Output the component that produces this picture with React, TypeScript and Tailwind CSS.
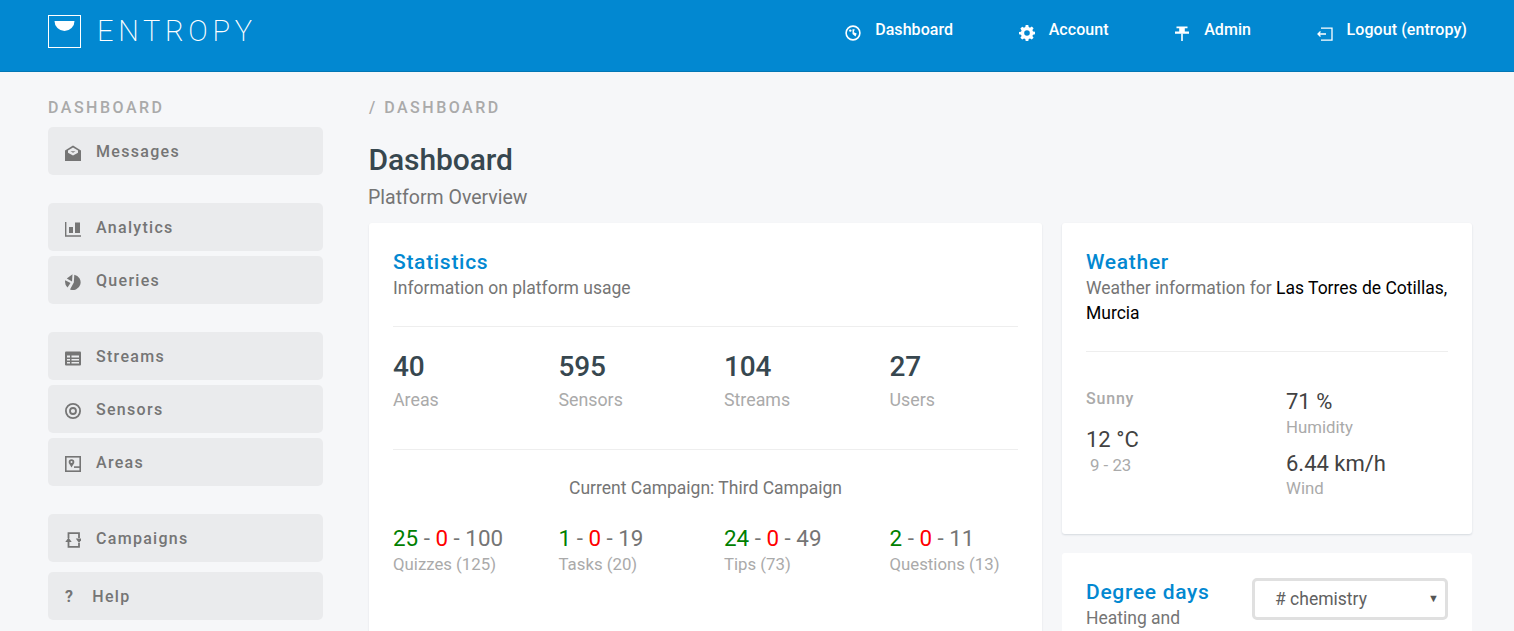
import type { ReactNode } from "react";

const font = "font-['Roboto',sans-serif]";

function Logo() {
  return (
    <svg width="33" height="33" viewBox="0 0 33 33" className="shrink-0">
      <rect x="0.5" y="0.5" width="32" height="32" fill="none" stroke="#fff" />
      <path d="M6.500 6h20a10 10 0 0 1-20 0z" fill="#fff" />
    </svg>
  );
}

function NavIcon({ name }: { name: string }) {
  if (name === "dashboard")
    return (
      <svg width="16" height="16" viewBox="0 0 16 16">
        <circle cx="8" cy="8" r="6.900" fill="none" stroke="#fff" strokeWidth="1.600" />
        <circle cx="5.300" cy="5.600" r="1.200" fill="#fff" />
        <path d="M7.500 4.200h2.200L8.800 7.300l2.900 1.200-1.200 2.900-3-2.500z" fill="#fff" />
      </svg>
    );
  if (name === "account")
    return (
      <svg width="16" height="16" viewBox="0 0 16 16">
        <path
          fillRule="evenodd"
          d="M6.700 0h2.600l.4 2.100 1.300.6L12.800 1.500l1.800 1.800-1.200 1.800.6 1.300 2 .4v2.500l-2 .4-.6 1.400 1.200 1.700-1.800 1.800-1.800-1.200-1.300.6-.4 2H6.700l-.4-2-1.300-.6-1.800 1.200-1.800-1.800 1.200-1.700-.6-1.400-2-.4V7.100l2-.4.600-1.300-1.200-1.800 1.800-1.800L5 2.700l1.300-.6zM8 5.200a2.800 2.800 0 100 5.600 2.800 2.800 0 000-5.600z"
          fill="#fff"
        />
      </svg>
    );
  if (name === "admin")
    return (
      <svg width="16" height="16" viewBox="0 0 16 16">
        <path d="M2.500 1.500h11v1.700h-2.700v3.300H15v2.200H1V6.500h4.200V3.200H2.500z" fill="#fff" />
        <rect x="7.200" y="8.500" width="1.600" height="7.500" fill="#fff" />
      </svg>
    );
  return (
    <svg width="16" height="16" viewBox="0 0 16 16" fill="none" stroke="#fff" strokeWidth="1.300">
      <path d="M4 3.200h11v12H4" />
      <path d="M1 9h8M3.500 6.500L1 9l2.500 2.500" />
    </svg>
  );
}

function SideIcon({ name }: { name: string }) {
  const c = "#757575";
  const s = (children: ReactNode) => (
    <svg width="16" height="16" viewBox="0 0 16 16" className="shrink-0 translate-y-[2px]">
      {children}
    </svg>
  );
  switch (name) {
    case "messages":
      return s(
        <>
          <path d="M0 5.500L8 .5l8 5V16H0z" fill={c} />
          <path d="M3 5.500L8 2.500l5 3v2.300L8 10.500 3 7.800z" fill="#eaebed" />
          <path d="M5.500 6h5L8 8z" fill={c} opacity=".7" />
        </>,
      );
    case "analytics":
      return s(
        <>
          <path d="M.7 1v14h15.300" fill="none" stroke={c} strokeWidth="1.400" />
          <rect x="4" y="6" width="4" height="6" fill={c} />
          <rect x="10" y="1.500" width="5" height="10.500" fill={c} />
        </>,
      );
    case "queries":
      return s(
        <>
          <path d="M7 7.500L1.800 4.500L7.500 .3z" fill={c} />
          <path d="M8.800 8.500L9.300 .8A7.700 7.700 0 1 1 5 15.500z" fill={c} />
          <path d="M5.500 9L2.500 13.500A8 8 0 0 1 .2 6.300z" fill={c} />
        </>,
      );
    case "streams":
      return s(
        <>
          <rect x="0" y="1.500" width="16" height="14" rx="1" fill={c} />
          <path d="M2 5.500h3v2H2zM6.500 5.500H14v2H6.500zM2 9h3v1.500H2zM6.500 9H14v1.500H6.500zM2 12h3v1.500H2zM6.500 12H14v1.500H6.500z" fill="#eaebed" />
        </>,
      );
    case "sensors":
      return s(
        <>
          <circle cx="8" cy="8" r="7.100" fill="none" stroke={c} strokeWidth="1.800" />
          <circle cx="8" cy="8" r="3" fill="none" stroke={c} strokeWidth="1.800" />
        </>,
      );
    case "areas":
      return s(
        <>
          <rect x=".8" y=".8" width="14.400" height="14.400" fill="none" stroke={c} strokeWidth="1.600" />
          <circle cx="6.500" cy="6" r="2.800" fill={c} />
          <circle cx="6.500" cy="6" r="1" fill="#eaebed" />
          <path d="M4.500 8L6.500 11.500l2-3.500z" fill={c} />
          <rect x="9" y="10.300" width="6" height="1.600" fill={c} />
        </>,
      );
    default:
      return s(
        <>
          <path d="M3.500 6V1.200H14V6M14 11V14.800H3.500V10" fill="none" stroke={c} strokeWidth="1.800" />
          <path d="M10.800 6.500h6.400L14 11z" fill={c} />
          <path d="M.3 10h6.400L3.500 5.500z" fill={c} />
        </>,
      );
  }
}

function SideItem({ icon, label, className = "" }: { icon: string; label: string; className?: string }) {
  return (
    <a className={`flex h-12 items-center rounded-[5px] bg-[#eaebed] pl-[17px] text-[16px] font-medium tracking-[1.3px] text-[#757575] ${className}`}>
      <SideIcon name={icon} />
      <span className="ml-[15px] translate-y-px">{label}</span>
    </a>
  );
}

function Stat({ value, label }: { value: string; label: string }) {
  return (
    <div>
      <div className="h-[37px] text-[28px] font-medium leading-[37px] tracking-[-0.2px] text-[#37474f]">{value}</div>
      <div className="mt-[5px] text-[17.800px] leading-[20px] text-[#aaaaaa]">{label}</div>
    </div>
  );
}

function Campaign({ a, b, c, label }: { a: number; b: number; c: number; label: string }) {
  return (
    <div>
      <div className="text-[22.400px] leading-[26px] text-[#757575]">
        <span className="text-[#008000]">{a}</span> - <span className="text-[#ff0000]">{b}</span> - {c}
      </div>
      <div className="mt-[3px] text-[16.800px] leading-[20px] text-[#aaaaaa]">{label}</div>
    </div>
  );
}

export default function App() {
  const nav = [
    { icon: "dashboard", label: "Dashboard" },
    { icon: "account", label: "Account" },
    { icon: "admin", label: "Admin" },
    { icon: "logout", label: "Logout (entropy)" },
  ];

  return (
    <div className={`h-[631px] overflow-hidden bg-[#f6f7f9] ${font}`}>
      <header className="flex h-[72px] items-start justify-between border-b border-[#0277b5] bg-[#0288d1] pl-[48px] pr-[47px]">
        <div className="mt-[15px] flex items-center">
          <Logo />
          <span className="ml-[16px] text-[29px] font-extralight leading-[33px] tracking-[4.650px] text-white">ENTROPY</span>
        </div>
        <nav className="mt-[20px] flex gap-[65.500px]">
          {nav.map((item) => (
            <a key={item.icon} className="flex items-start text-[16px] font-medium leading-[20px] tracking-[0.07px] text-white">
              <span className="mr-[14px] mt-[5px]">
                <NavIcon name={item.icon} />
              </span>
              {item.label}
            </a>
          ))}
        </nav>
      </header>

      <div className="flex items-start pl-[48px] pr-[42px]">
        <aside className="w-[275px] shrink-0 pt-[26px]">
          <div className="text-[16px] font-medium leading-[19px] tracking-[2.500px] text-[#aaaaaa]">DASHBOARD</div>
          <div className="mt-[10px] flex flex-col">
            <SideItem icon="messages" label="Messages" />
            <SideItem icon="analytics" label="Analytics" className="mt-[28px]" />
            <SideItem icon="queries" label="Queries" className="mt-[5px]" />
            <SideItem icon="streams" label="Streams" className="mt-[28px]" />
            <SideItem icon="sensors" label="Sensors" className="mt-[5px]" />
            <SideItem icon="areas" label="Areas" className="mt-[5px]" />
            <SideItem icon="campaigns" label="Campaigns" className="mt-[28px]" />
            <a className="mt-[10px] flex h-12 items-center rounded-[5px] bg-[#eaebed] pl-[17px] text-[16px] font-medium tracking-[1.300px] text-[#757575]">
              <span className="translate-y-px font-bold">?</span>
              <span className="ml-[18px] translate-y-px">Help</span>
            </a>
          </div>
        </aside>

        <main className="ml-[46px] min-w-0 flex-1 pt-[26px]">
          <div className="text-[16px] font-medium leading-[19px] tracking-[2.500px] text-[#aaaaaa]">/ DASHBOARD</div>
          <h1 className="-ml-[0.5px] mt-[24px] text-[30px] font-medium leading-[38px] tracking-[-0.1px] text-[#37474f]">Dashboard</h1>
          <p className="-ml-px mt-[7px] text-[19.500px] leading-[24px] text-[#757575]">Platform Overview</p>

          <div className="mt-[13px] flex items-start gap-[20px]">
            <section className="h-[420px] w-[673px] shrink-0 rounded-[3px] bg-white px-[24px] pt-[26px] shadow-[0_1px_2px_rgba(40,60,90,0.12)]">
              <h2 className="text-[21px] font-medium leading-[26px] tracking-[0.700px] text-[#0288d1]">Statistics</h2>
              <p className="mt-px text-[17.500px] leading-[25px] text-[#757575]">Information on platform usage</p>
              <hr className="mt-[25px] border-[#eeeeee]" />
              <div className="mt-[21px] grid grid-cols-[165.500px_165.500px_165.500px_1fr]">
                <Stat value="40" label="Areas" />
                <Stat value="595" label="Sensors" />
                <Stat value="104" label="Streams" />
                <Stat value="27" label="Users" />
              </div>
              <hr className="mt-[39px] border-[#eeeeee]" />
              <div className="mt-[27px] text-center text-[17.500px] leading-[22px] text-[#757575]">Current Campaign: Third Campaign</div>
              <div className="mt-[26px] grid grid-cols-[165.500px_165.500px_165.500px_1fr]">
                <Campaign a={25} b={0} c={100} label="Quizzes (125)" />
                <Campaign a={1} b={0} c={19} label="Tasks (20)" />
                <Campaign a={24} b={0} c={49} label="Tips (73)" />
                <Campaign a={2} b={0} c={11} label="Questions (13)" />
              </div>
            </section>

            <div className="min-w-0 flex-1">
              <section className="h-[311px] rounded-[3px] bg-white px-[24px] pt-[26px] shadow-[0_1px_2px_rgba(40,60,90,0.16)]">
                <h2 className="text-[21px] font-medium leading-[26px] tracking-[0.700px] text-[#0288d1]">Weather</h2>
                <p className="mt-px text-[17.500px] leading-[25px] text-[#757575]">
                  Weather information for <span className="text-black">Las Torres de Cotillas, Murcia</span>
                </p>
                <hr className="mt-[25px] border-[#eeeeee]" />
                <div className="mt-[37px] grid grid-cols-[200px_1fr]">
                  <div>
                    <div className="text-[16px] font-medium leading-[20px] tracking-[0.800px] text-[#aaaaaa]">Sunny</div>
                    <div className="mt-[18px] text-[22px] leading-[26px] text-[#424242]">12 °C</div>
                    <div className="ml-[4px] mt-[2px] text-[16.800px] leading-[20px] text-[#aaaaaa]">9 - 23</div>
                  </div>
                  <div>
                    <div className="text-[22px] leading-[26px] text-[#424242]">71 %</div>
                    <div className="mt-[2px] text-[16.800px] leading-[20px] text-[#aaaaaa]">Humidity</div>
                    <div className="mt-[14px] text-[22px] leading-[26px] text-[#424242]">6.44 km/h</div>
                    <div className="mt-[1px] text-[16.800px] leading-[20px] text-[#aaaaaa]">Wind</div>
                  </div>
                </div>
              </section>

              <section className="mt-[19px] h-[100px] rounded-[3px] bg-white px-[24px] pt-[26px]">
                <div className="flex items-start justify-between">
                  <div>
                    <h2 className="text-[21px] font-medium leading-[26px] tracking-[0.700px] text-[#0288d1]">Degree days</h2>
                    <p className="mt-[1px] text-[17.500px] leading-[25px] text-[#757575]">Heating and</p>
                  </div>
                  <div className="-mt-[1px] flex h-[42px] w-[196px] items-center justify-between rounded-[5px] border-[3px] border-[#e0e0e0] bg-white pl-[20px] pr-[6px] text-[17.500px] text-[#616161]">
                    <span># chemistry</span>
                    <span className="text-[11px] text-[#555555]">▼</span>
                  </div>
                </div>
              </section>
            </div>
          </div>
        </main>
      </div>
    </div>
  );
}
